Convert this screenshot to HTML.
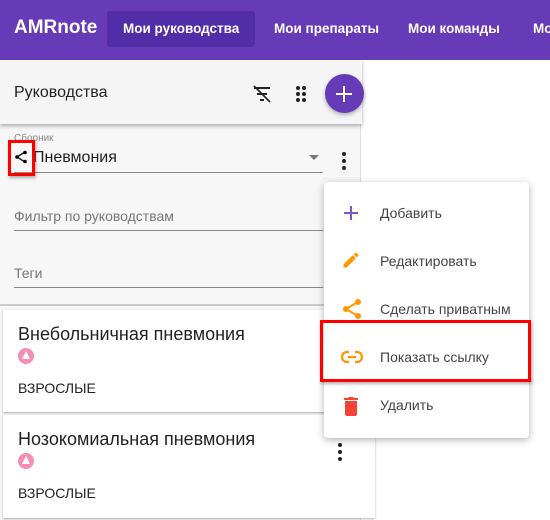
<!DOCTYPE html>
<html><head><meta charset="utf-8"><style>
*{box-sizing:border-box;margin:0;padding:0}
body{width:550px;height:520px;overflow:hidden;background:#fff;font-family:"Liberation Sans",Roboto,sans-serif;position:relative}
.abs{position:absolute}
.hdr{left:0;top:0;width:550px;height:60px;background:#673ab7}
.tab{color:#fff;font-weight:bold;font-size:13.5px;top:21px}
.panel{left:0;top:60px;width:361px;height:460px;background:#f7f7f7;border-right:1px solid #ddd}
.tool{left:0;top:60px;width:362px;height:64px;background:#f5f5f5;box-shadow:0 2px 4px rgba(0,0,0,.3)}
.line{height:1px;background:#888;left:14px;width:309px}
.lbl{font-size:14px;color:#777}
.card{left:3px;width:372px;background:#fff;box-shadow:0 1px 2px rgba(0,0,0,.3)}
.menu{left:324px;top:182px;width:205px;height:256px;background:#fff;border-radius:4px;box-shadow:0 2px 8px rgba(0,0,0,.3)}
.mi{left:380px;font-size:14px;color:#444}
.red{border:3px solid #f00}
</style></head><body>
<div class="abs hdr"></div>
<div class="abs" style="left:14px;top:17px;color:#fff;font-weight:bold;font-size:19px">AMRnote</div>
<div class="abs" style="left:107px;top:11px;width:148px;height:36px;background:#512da8;border-radius:3px"></div>
<div class="abs tab" style="left:123px">Мои руководства</div>
<div class="abs tab" style="left:274px">Мои препараты</div>
<div class="abs tab" style="left:408px">Мои команды</div>
<div class="abs tab" style="left:533px">Мои</div>
<div class="abs panel"></div>
<div class="abs tool"></div>
<div class="abs" style="left:14px;top:84px;font-size:16px;color:#222">Руководства</div>
<svg class="abs" style="left:251px;top:84px" width="22" height="20" viewBox="0 0 22 20"><path d="M3 4h16M6 10h10M9 16h4" stroke="#222" stroke-width="2"/><path d="M3 2l16 16" stroke="#222" stroke-width="1.6"/></svg>
<svg class="abs" style="left:295px;top:85px" width="12" height="20"><g fill="#222"><circle cx="3" cy="3" r="2"/><circle cx="9" cy="3" r="2"/><circle cx="3" cy="9" r="2"/><circle cx="9" cy="9" r="2"/><circle cx="3" cy="15" r="2"/><circle cx="9" cy="15" r="2"/></g></svg>
<div class="abs" style="left:325px;top:74px;width:39px;height:39px;border-radius:50%;background:#673ab7;box-shadow:0 2px 4px rgba(0,0,0,.3)"></div>
<div class="abs" style="left:336px;top:92.5px;width:16px;height:2px;background:#fff"></div>
<div class="abs" style="left:343px;top:85.5px;width:2px;height:16px;background:#fff"></div>
<div class="abs" style="left:14px;top:133px;font-size:10px;color:#888">Сборник</div>
<svg class="abs" style="left:14px;top:150px" width="14" height="14" viewBox="0 0 14 14"><path d="M11 2L3 7l8 5" stroke="#222" stroke-width="1.5" fill="none"/><circle cx="11" cy="2.5" r="1.8"/><circle cx="3" cy="7" r="1.8"/><circle cx="11" cy="11.5" r="1.8"/></svg>
<div class="abs" style="left:33px;top:149px;font-size:16px;color:#222">Пневмония</div>
<div class="abs" style="left:309px;top:155px;border:5px solid transparent;border-top-color:#777"></div>
<div class="abs line" style="top:172px"></div>
<svg class="abs" style="left:340px;top:151px" width="8" height="20"><g fill="#222"><circle cx="4" cy="3" r="2"/><circle cx="4" cy="10" r="2"/><circle cx="4" cy="17" r="2"/></g></svg>
<div class="abs lbl" style="left:14px;top:208px">Фильтр по руководствам</div>
<div class="abs line" style="top:230px"></div>
<div class="abs lbl" style="left:14px;top:265px">Теги</div>
<div class="abs line" style="top:287px"></div>
<div class="abs" style="left:0;top:304px;width:378px;height:2px;background:#ccc"></div>
<div class="abs card" style="top:310px;height:102px"></div>
<div class="abs card" style="top:415px;height:103px"></div>
<div class="abs" style="left:18px;top:324px;font-size:18px;color:#222">Внебольничная пневмония</div>
<div class="abs" style="left:18px;top:348px;width:16px;height:16px;border-radius:50%;background:#f48fb1"></div>
<div class="abs" style="left:22px;top:351px;border:4px solid transparent;border-bottom:8px solid #fff;border-top:0"></div>
<div class="abs" style="left:18px;top:380px;font-size:14px;color:#222">ВЗРОСЛЫЕ</div>
<div class="abs" style="left:18px;top:429px;font-size:18px;color:#222">Нозокомиальная пневмония</div>
<div class="abs" style="left:18px;top:453px;width:16px;height:16px;border-radius:50%;background:#f48fb1"></div>
<div class="abs" style="left:22px;top:456px;border:4px solid transparent;border-bottom:8px solid #fff;border-top:0"></div>
<div class="abs" style="left:18px;top:485px;font-size:14px;color:#222">ВЗРОСЛЫЕ</div>
<svg class="abs" style="left:336px;top:442px" width="8" height="20"><g fill="#222"><circle cx="4" cy="3" r="2"/><circle cx="4" cy="10" r="2"/><circle cx="4" cy="17" r="2"/></g></svg>
<div class="abs menu"></div>
<svg class="abs" style="left:342px;top:204px" width="18" height="18"><path d="M9 2v14M2 9h14" stroke="#7e57c2" stroke-width="2"/></svg>
<svg class="abs" style="left:341px;top:250px" width="20" height="20" viewBox="0 0 24 24"><path fill="#ff9800" d="M3 17.25V21h3.75L17.81 9.940l-3.75-3.75L3 17.25zM20.71 7.04a1 1 0 000-1.41l-2.34-2.34a1 1 0 00-1.41 0l-1.830 1.830 3.75 3.75 1.83-1.83z"/></svg>
<svg class="abs" style="left:341px;top:298px" width="22" height="22" viewBox="0 0 22 22"><path d="M17 4L5 11l12 7" stroke="#ff9800" stroke-width="2" fill="none"/><g fill="#ff9800"><circle cx="17" cy="4" r="3"/><circle cx="5" cy="11" r="3"/><circle cx="17" cy="18" r="3"/></g></svg>
<svg class="abs" style="left:341px;top:350px" width="22" height="14" viewBox="0 0 22 14"><path d="M8 2H6a5 5 0 000 10h2M14 2h2a5 5 0 010 10h-2M7 7h8" stroke="#ff9800" stroke-width="2.2" fill="none"/></svg>
<svg class="abs" style="left:343px;top:396px" width="16" height="20" viewBox="0 0 16 20"><path fill="#f44336" d="M1 2h4l1-1h4l1 1h4v2H1zM2 5h12v13a2 2 0 01-2 2H4a2 2 0 01-2-2z"/></svg>
<div class="abs mi" style="top:205px">Добавить</div>
<div class="abs mi" style="top:253px">Редактировать</div>
<div class="abs mi" style="top:301px">Сделать приватным</div>
<div class="abs mi" style="top:349px">Показать ссылку</div>
<div class="abs mi" style="top:397px">Удалить</div>
<div class="abs red" style="left:8px;top:140px;width:27px;height:36px;box-shadow:1px 2px 3px rgba(0,0,0,.3)"></div>
<div class="abs red" style="left:320px;top:320px;width:211px;height:62px;box-shadow:1px 2px 3px rgba(0,0,0,.3)"></div>
</body></html>
